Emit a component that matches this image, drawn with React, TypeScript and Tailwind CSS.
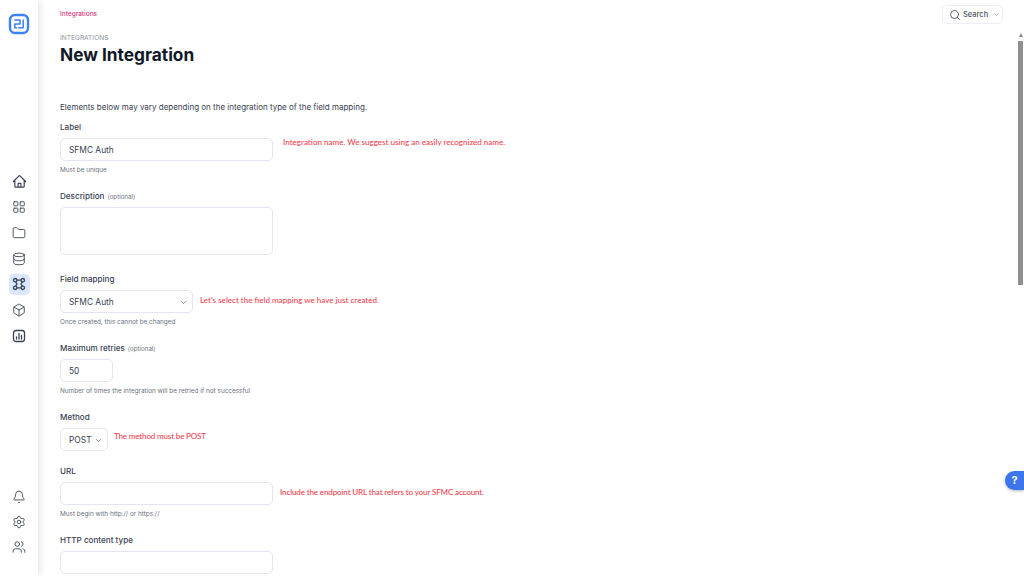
import type { ReactNode } from 'react'
import { Bell, Box, ChevronDown, Database, Folder, LayoutGrid, Search, Settings, Users } from 'lucide-react'

const INTER = 'font-["Inter","Liberation_Sans",sans-serif]'
const NOTE = 'font-["Lato","Open_Sans",sans-serif]'

function Logo() {
  return (
    <svg width="22" height="22" viewBox="0 0 22 22" fill="none" stroke="#3b82f6" strokeLinecap="round" strokeLinejoin="round">
      <rect x="2" y="2" width="18" height="18" rx="5" strokeWidth="2.4" />
      <path d="M6.8 7h5.2v4h-5.2M6.8 11v3.8h1.7M15.2 7v7.8h-4.5" strokeWidth="1.5" />
    </svg>
  )
}

function HomeIcon() {
  return (
    <svg width="15" height="15" viewBox="0 0 24 24" fill="none" stroke="#374151" strokeWidth="1.9" strokeLinecap="round" strokeLinejoin="round">
      <path d="m2.25 12 8.954-8.955c.44-.439 1.152-.439 1.591 0L21.75 12M4.5 9.75v10.125c0 .621.504 1.125 1.125 1.125H9.75v-4.875c0-.621.504-1.125 1.125-1.125h2.25c.621 0 1.125.504 1.125 1.125V21h4.125c.621 0 1.125-.504 1.125-1.125V9.75M8.25 21h8.25" />
    </svg>
  )
}

function FlowIcon() {
  return (
    <svg width="14" height="14" viewBox="0 0 14 14" fill="none" stroke="#374151" strokeWidth="1.3">
      <circle cx="3.2" cy="3.2" r="1.7" />
      <circle cx="10.8" cy="3.2" r="1.7" />
      <circle cx="3.2" cy="10.8" r="1.7" />
      <circle cx="10.8" cy="10.8" r="1.7" />
      <path d="M4.9 3.2h4.2M4.9 10.8h4.2M3.6 4.9 5 7l-1.4 2.1M10.4 4.9 9 7l1.4 2.1" />
    </svg>
  )
}

function ChartIcon() {
  return (
    <svg width="14" height="14" viewBox="0 0 14 14" fill="none" stroke="#374151" strokeWidth="1.3" strokeLinecap="round">
      <rect x="1.5" y="1.5" width="11" height="11" rx="2.5" />
      <path d="M4.5 10V8M7 10V4.5M9.5 10V6.5" />
    </svg>
  )
}

function Field({ label, optional, hint, note, noteClass, children, className }: {
  label: string
  optional?: boolean
  hint?: string
  note?: string
  noteClass?: string
  children: ReactNode
  className?: string
}) {
  return (
    <div className={className}>
      <div className="h-[11px] flex items-baseline text-[8.1px] leading-[11px] font-medium text-[#374151]">
        {label}
        {optional && <span className="ml-[3px] text-[6.2px] font-normal text-[#6b7280]">(optional)</span>}
      </div>
      <div className="mt-[5px] flex items-start">
        {children}
        {note && <span className={`${NOTE} text-[8.05px] leading-none font-medium text-[#f4434f] ${noteClass}`}>{note}</span>}
      </div>
      {hint && <div className="mt-[5px] h-[8px] flex items-center text-[6.4px] leading-none text-[#6b7280]">{hint}</div>}
    </div>
  )
}

function Input({ value, width }: { value?: string; width: string }) {
  return (
    <div className={`${width} h-[23px] flex items-center px-[8px] pt-[1px] border border-[#e2e6f0] rounded-[5px] bg-white text-[8.4px] text-[#374151]`}>
      {value}
    </div>
  )
}

function Select({ value, width }: { value: string; width: string }) {
  return (
    <div className={`${width} h-[23px] flex items-center justify-between pl-[8px] pr-[4px] pt-[1px] border border-[#e2e6f0] rounded-[5px] bg-white text-[8.4px] text-[#374151]`}>
      {value}
      <ChevronDown size={9} color="#6b7280" />
    </div>
  )
}

export default function App() {
  const mainIcons = [
    <HomeIcon key="home" />,
    <LayoutGrid key="grid" size={14} strokeWidth={1.5} color="#374151" />,
    <Folder key="folder" size={14} strokeWidth={1.5} color="#374151" />,
    <Database key="db" size={14} strokeWidth={1.5} color="#374151" />,
    <FlowIcon key="flow" />,
    <Box key="box" size={14} strokeWidth={1.5} color="#374151" />,
    <ChartIcon key="chart" />,
  ]

  return (
    <div className={`${INTER} relative flex h-screen w-[1024px] overflow-hidden bg-white`}>
      <aside className="w-[38px] shrink-0 flex flex-col items-center shadow-[2px_0_8px_rgba(0,0,0,0.10)] z-10 pt-[13px] pb-[22px]">
        <Logo />
        <nav className="mt-[136px] flex flex-col items-center gap-[4.7px]">
          {mainIcons.map((icon, i) => (
            <div key={i} className={`w-[21px] h-[21px] flex items-center justify-center rounded-[5px] ${i === 4 ? 'bg-[#dbe7fe]' : ''}`}>
              {icon}
            </div>
          ))}
        </nav>
        <div className="mt-auto flex flex-col items-center gap-[11px]">
          <Bell size={14} strokeWidth={1.5} color="#374151" />
          <Settings size={14} strokeWidth={1.5} color="#374151" />
          <Users size={14} strokeWidth={1.5} color="#374151" />
        </div>
      </aside>

      <main className="flex-1 min-w-0 flex flex-col">
        <header className="h-[30px] shrink-0 flex justify-between pl-[22px] pr-[21px] pt-[5px]">
          <span className="mt-[6px] text-[6.5px] leading-none font-medium text-[#e0337f]">Integrations</span>
          <div className="h-[19px] w-[61px] flex items-center gap-[2px] pl-[6px] border border-[#eceef3] rounded-[5px] text-[7.5px] font-medium text-[#4b5563]">
            <Search size={12} strokeWidth={1.7} color="#374151" />
            Search
            <ChevronDown size={7} color="#6b7280" className="ml-[3px]" />
          </div>
        </header>

        <div className="flex-1 min-h-0 flex">
          <div className="flex-1 min-w-0 pl-[22px]">
            <div className="mt-[4px] text-[6.6px] leading-[8px] text-[#8b93a1]">INTEGRATIONS</div>
            <h1 className="mt-[2px] text-[17.3px] leading-[22px] font-bold text-[#111827]">New Integration</h1>
            <p className="mt-[35px] h-[12px] flex items-center text-[8px] leading-none text-[#374151]">Elements below may vary depending on the integration type of the field mapping.</p>

            <Field className="mt-[9px]" label="Label" hint="Must be unique" note="Integration name. We suggest using an easily recognized name." noteClass="ml-[10px] mt-0">
              <Input value="SFMC Auth" width="w-[213px]" />
            </Field>

            <Field className="mt-[17px]" label="Description" optional>
              <div className="w-[213px] h-[48px] border border-[#e2e6f0] rounded-[5px]" />
            </Field>

            <Field className="mt-[19px]" label="Field mapping" hint="Once created, this cannot be changed" note="Let's select the field mapping we have just created." noteClass="ml-[7px] mt-[6px]">
              <Select value="SFMC Auth" width="w-[133px]" />
            </Field>

            <Field className="mt-[17px]" label="Maximum retries" optional hint="Number of times the integration will be retried if not successful">
              <Input value="50" width="w-[53px]" />
            </Field>

            <Field className="mt-[17px]" label="Method" note="The method must be POST" noteClass="ml-[6px] mt-[4px] tracking-[-0.17px]">
              <Select value="POST" width="w-[48px]" />
            </Field>

            <Field className="mt-[15px]" label="URL" hint="Must begin with http:// or https://" note="Include the endpoint URL that refers to your SFMC account." noteClass="ml-[7px] mt-[6px] tracking-[-0.14px]">
              <Input width="w-[213px]" />
            </Field>

            <Field className="mt-[17px]" label="HTTP content type">
              <Input width="w-[213px]" />
            </Field>
          </div>

          <div className="w-[7px] shrink-0 px-[1px] flex flex-col items-center">
            <div className="mt-[3px] w-0 h-0 border-x-[2.5px] border-x-transparent border-b-[4px] border-b-[#8a8a8a]" />
            <div className="mt-[4px] w-[5px] h-[244px] bg-[#8f8f8f]" />
          </div>
        </div>
      </main>

      <button className="absolute right-0 top-[471px] w-[19px] h-[19px] rounded-l-full bg-[#3b76ee] text-white text-[11px] leading-none font-bold shadow-[0_1px_3px_rgba(0,0,0,0.3)] z-20">?</button>
    </div>
  )
}
